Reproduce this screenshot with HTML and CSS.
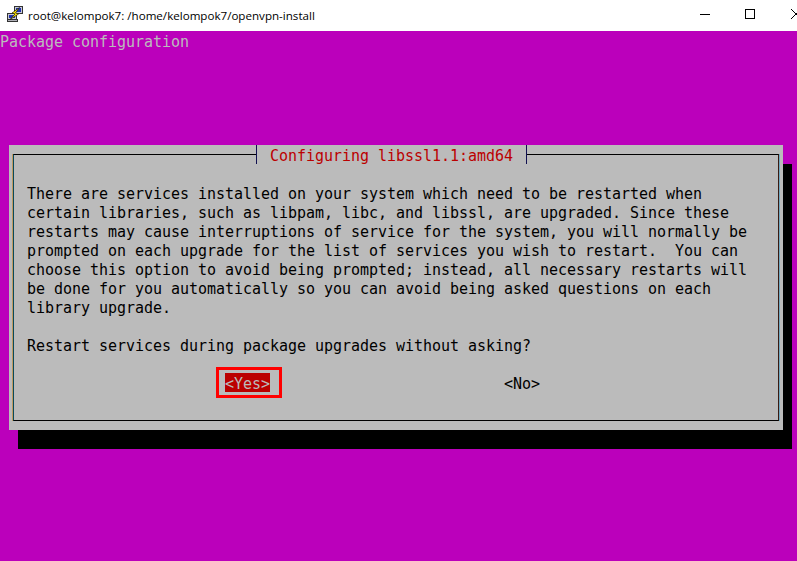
FILE: index.html
```html
<!DOCTYPE html>
<html lang="en">
<head>
<meta charset="utf-8">
<title>PuTTY</title>
<link rel="stylesheet" href="styles.css">
</head>
<body>
<div class="window">
  <header class="titlebar">
    <svg class="app-icon" width="16" height="16" viewBox="0 0 16 16">
      <rect x="7.5" y="0.5" width="8" height="7" fill="#c8c8d8" stroke="#333"/>
      <rect x="9" y="2" width="5" height="4" fill="#2030b0"/>
      <rect x="0.5" y="7.5" width="9" height="6" fill="#c8c8d0" stroke="#333"/>
      <rect x="2" y="9" width="6" height="3" fill="#2030b0"/>
      <rect x="0.5" y="13.5" width="10" height="2" fill="#b0b0b8" stroke="#333"/>
      <path d="M12.5 1.5 L5 7 L8 8 L3 13.5 L11.5 8 L8.5 7 Z" fill="#ffe800" stroke="#000" stroke-width="0.6"/>
    </svg>
    <span class="title-text">root@kelompok7: /home/kelompok7/openvpn-install</span>
    <div class="controls">
      <span class="ctl-min"></span>
      <span class="ctl-max"></span>
      <svg class="ctl-close" width="10" height="10" viewBox="0 0 10 10"><path d="M0 0 L10 10 M0 10 L10 0" stroke="#000" fill="none"/></svg>
    </div>
  </header>
  <main class="terminal">
    <div class="pkg">Package configuration</div>
    <section class="dialog">
      <div class="frame">
        <div class="legend"><h1 class="legend-text">Configuring libssl1.1:amd64</h1></div>
        <pre class="message">There are services installed on your system which need to be restarted when
certain libraries, such as libpam, libc, and libssl, are upgraded. Since these
restarts may cause interruptions of service for the system, you will normally be
prompted on each upgrade for the list of services you wish to restart.  You can
choose this option to avoid being prompted; instead, all necessary restarts will
be done for you automatically so you can avoid being asked questions on each
library upgrade.

Restart services during package upgrades without asking?</pre>
        <div class="buttons">
          <span class="btn btn-yes">&lt;Yes&gt;</span>
          <span class="btn btn-no">&lt;No&gt;</span>
        </div>
      </div>
    </section>
  </main>
</div>
</body>
</html>
```
FILE: styles.css
```css
html, body {
  margin: 0;
  padding: 0;
}
body {
  width: 797px;
  height: 561px;
  overflow: hidden;
}
.window {
  display: flex;
  flex-direction: column;
  height: 561px;
  overflow: hidden;
}
.titlebar {
  flex: 0 0 31px;
  display: flex;
  align-items: center;
  background: #fff;
  padding-left: 7px;
  overflow: hidden;
}
.app-icon {
  flex: none;
  margin: -3px 5px 0 0;
}
.title-text {
  font: 11.6px/16px "Open Sans", "Liberation Sans", sans-serif;
  color: #000;
  white-space: nowrap;
}
.controls {
  margin: -3px 0 0 auto;
  display: flex;
  align-items: center;
}
.ctl-min {
  width: 10px;
  height: 1px;
  background: #000;
  margin-right: 35px;
}
.ctl-max {
  width: 8px;
  height: 8px;
  border: 1px solid #000;
  margin-right: 36px;
}
.ctl-close {
  flex: none;
  margin-right: -4px;
}
.terminal {
  flex: 1;
  background: #bb00bb;
  font: 15px/19px "DejaVu Sans Mono", "Liberation Mono", monospace;
  letter-spacing: -0.03px;
  color: #000;
}
.pkg {
  height: 19px;
  line-height: 23px;
  color: #bbbbbb;
  white-space: pre;
}
.dialog {
  box-sizing: border-box;
  width: 774px;
  height: 285px;
  margin: 95px 0 0 9px;
  padding: 9px 4px 9px 4px;
  background: #bbbbbb;
  box-shadow: 9px 19px 0 #000;
}
.frame {
  box-sizing: border-box;
  height: 267px;
  border: 1px solid #000;
  border-left-color: #0a4a5a;
  border-right-color: #3a1a10;
  box-shadow: -1px 0 0 #c09a60, 1px 0 0 #70a8c0;
  padding-left: 13px;
}
.legend {
  display: flex;
  height: 0;
  margin-left: -13px;
  padding-left: 242px;
}
.legend-text {
  flex: none;
  box-sizing: border-box;
  height: 19px;
  width: 271px;
  margin: -10px 0 0 0;
  padding-left: 13px;
  background: #bbbbbb;
  border-left: 1px solid #101050;
  border-right: 1px solid #101050;
  color: #bb0000;
  font: inherit;
  line-height: 23px;
}
.message {
  margin: 0;
  padding-top: 30px;
  font: inherit;
  height: 171px;
}
.buttons {
  display: flex;
  margin-top: 17px;
  padding-left: 198px;
}
.btn {
  white-space: pre;
  height: 19px;
  line-height: 23px;
}
.btn-yes {
  position: relative;
  background: #bb0000;
  color: #bbbbbb;
}
.btn-yes::after {
  content: "";
  position: absolute;
  inset: -6px -12px -6px -9px;
  border: 3px solid #ff0000;
}
.btn-no {
  margin-left: 234px;
}
```
